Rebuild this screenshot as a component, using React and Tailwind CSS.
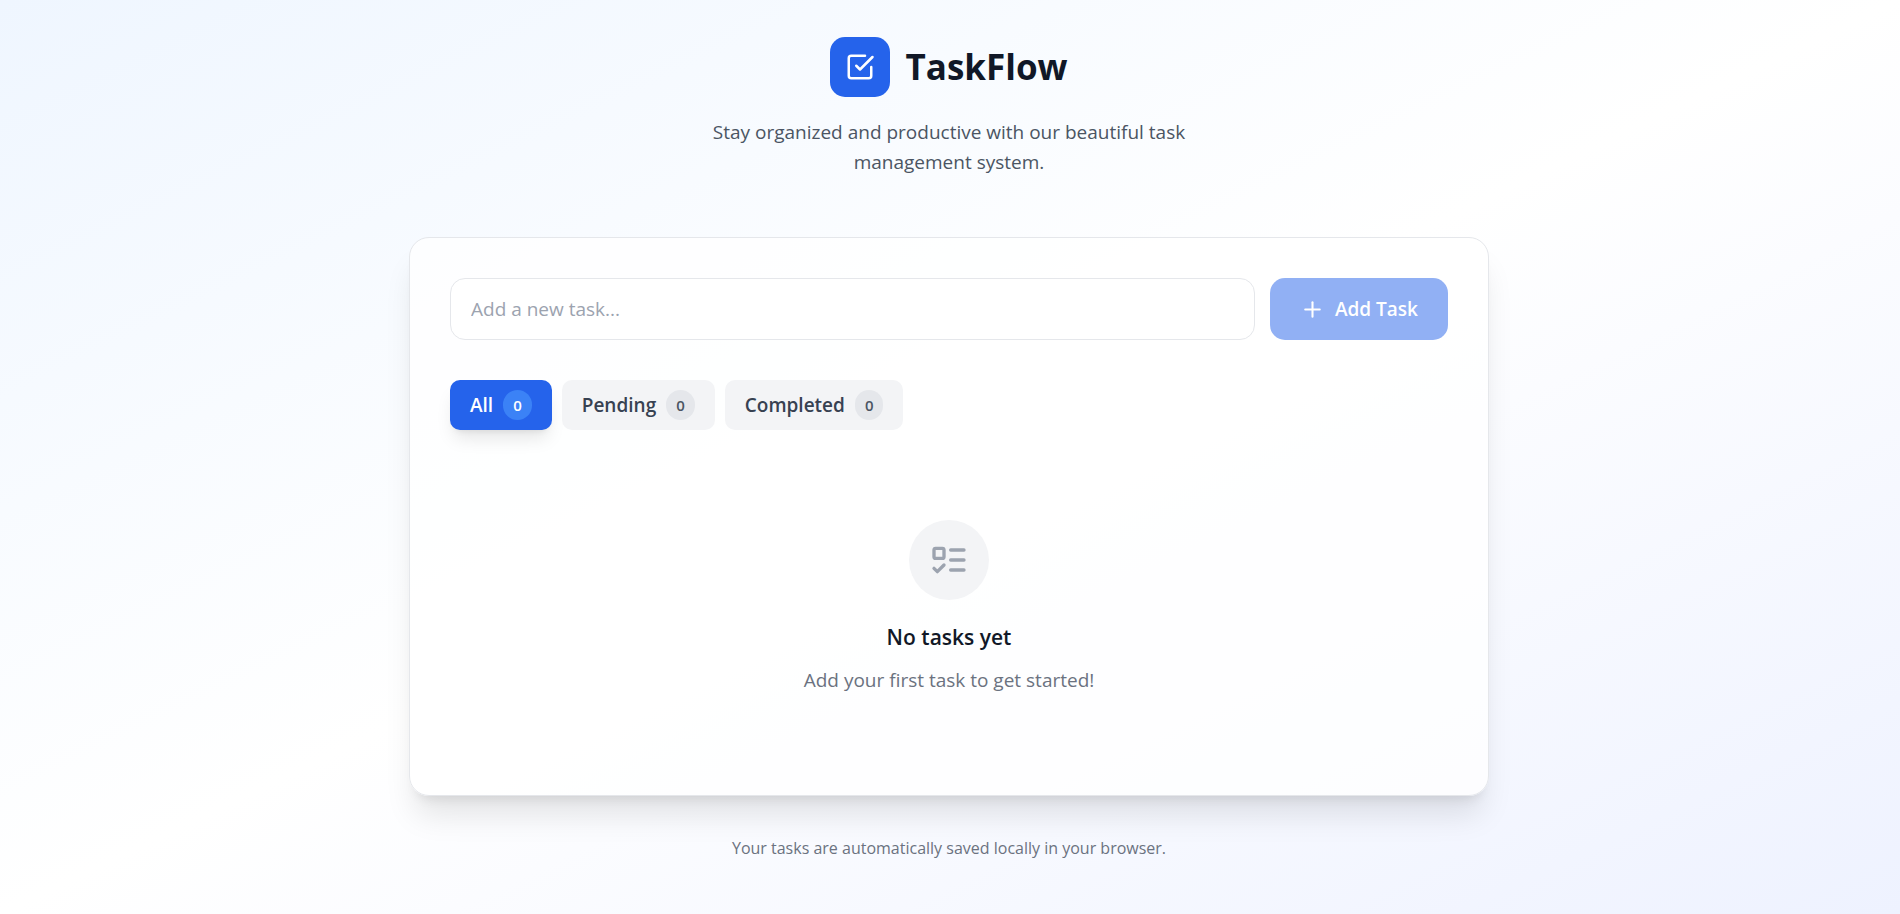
import { useState } from "react";
import { Plus } from "lucide-react";

const filters = ["All", "Pending", "Completed"];

function CheckSquareIcon({ className }) {
  return (
    <svg
      aria-hidden="true"
      viewBox="0 0 24 24"
      fill="none"
      stroke="currentColor"
      strokeWidth="2"
      strokeLinecap="round"
      strokeLinejoin="round"
      className={className}
    >
      <path d="m9 11 3 3L22 4" />
      <path d="M21 12v7a2 2 0 0 1-2 2H5a2 2 0 0 1-2-2V5a2 2 0 0 1 2-2h11" />
    </svg>
  );
}

function ListTodoIcon({ className }) {
  return (
    <svg
      aria-hidden="true"
      viewBox="0 0 24 24"
      fill="none"
      stroke="currentColor"
      strokeWidth="2"
      strokeLinecap="round"
      strokeLinejoin="round"
      className={className}
    >
      <rect x="3" y="5" width="6" height="6" rx="1" />
      <path d="m3 17 2 2 4-4" />
      <path d="M13 6h8" />
      <path d="M13 12h8" />
      <path d="M13 18h8" />
    </svg>
  );
}

export default function App() {
  const [tasks, setTasks] = useState([]);
  const [draft, setDraft] = useState("");
  const [active, setActive] = useState("All");

  const select = (name) =>
    tasks.filter((t) => name === "All" || (name === "Completed") === t.done);
  const visible = select(active);

  const addTask = (e) => {
    e.preventDefault();
    if (!draft.trim()) return;
    setTasks([...tasks, { id: Date.now(), text: draft.trim(), done: false }]);
    setDraft("");
  };

  const toggle = (id) =>
    setTasks(tasks.map((t) => (t.id === id ? { ...t, done: !t.done } : t)));

  return (
    <div className="min-h-screen bg-linear-to-br from-[#eff6ff] via-white to-[#eef2ff] pr-0.5 font-['Open_Sans','Noto_Sans',sans-serif] text-[19px] leading-[30px]">
      <main className="mx-auto max-w-[1120px] px-5 py-[37px]">
        <header className="mb-[60px] text-center">
          <div className="mb-5 flex items-center justify-center gap-[15px]">
            <div className="flex size-[60px] items-center justify-center rounded-[15px] bg-[#2563eb]">
              <CheckSquareIcon className="size-[30px] text-white" />
            </div>
            <h1 className="text-[35px] leading-[50px] font-bold text-[#111827]">TaskFlow</h1>
          </div>
          <p className="mx-auto max-w-[560px] text-[#4b5563]">
            Stay organized and productive with our beautiful task management system.
          </p>
        </header>

        <section className="rounded-[20px] border border-[#e5e7eb] bg-white/80 p-10 shadow-[0_25px_31px_-6px_rgba(0,0,0,0.1),0_10px_12px_-8px_rgba(0,0,0,0.1)]">
          <form onSubmit={addTask} className="mb-10 flex gap-[15px]">
            <input
              aria-label="New task"
              value={draft}
              onChange={(e) => setDraft(e.target.value)}
              placeholder="Add a new task..."
              className="h-[62px] min-w-0 flex-1 rounded-[15px] border border-[#e5e7eb] bg-white px-5 text-[#111827] placeholder:text-[#9ca3af]"
            />
            <button
              type="submit"
              disabled={!draft.trim()}
              className="flex items-center gap-[10px] rounded-[15px] bg-[#2563eb] px-[30px] font-semibold text-white disabled:opacity-50"
            >
              <Plus className="size-[25px]" strokeWidth={2} />
              Add Task
            </button>
          </form>

          <div className="mb-[30px] flex flex-wrap gap-[10px]">
            {filters.map((name) => (
              <button
                key={name}
                type="button"
                aria-pressed={active === name}
                onClick={() => setActive(name)}
                className={
                  active === name
                    ? "flex h-[50px] items-center gap-[10px] rounded-[10px] bg-[#2563eb] px-5 font-semibold text-white shadow-[0_12px_18px_-4px_rgba(0,0,0,0.1),0_5px_7px_-5px_rgba(0,0,0,0.1)]"
                    : "flex h-[50px] items-center gap-[10px] rounded-[10px] bg-[#f3f4f6] px-5 font-semibold text-[#374151]"
                }
              >
                {name}
                <span
                  className={
                    active === name
                      ? "rounded-full bg-[#3b82f6] px-[10px] text-[15px] text-white"
                      : "rounded-full bg-[#e5e7eb] px-[10px] text-[15px] text-[#4b5563]"
                  }
                >
                  {select(name).length}
                </span>
              </button>
            ))}
          </div>

          {visible.length === 0 ? (
            <div className="py-[60px] text-center">
              <div className="mx-auto mb-5 flex size-20 items-center justify-center rounded-full bg-[#f3f4f6]">
                <ListTodoIcon className="size-10 text-[#9ca3af]" />
              </div>
              <h2 className="mb-[10px] text-[21px] leading-[35px] font-semibold text-[#111827]">No tasks yet</h2>
              <p className="text-[#6b7280]">Add your first task to get started!</p>
            </div>
          ) : (
            <ul className="flex flex-col gap-[10px]">
              {visible.map((t) => (
                <li key={t.id}>
                  <label className="flex items-center gap-[15px] rounded-[15px] border border-[#e5e7eb] bg-white p-5">
                    <input type="checkbox" checked={t.done} onChange={() => toggle(t.id)} className="size-5" />
                    <span>{t.text}</span>
                  </label>
                </li>
              ))}
            </ul>
          )}
        </section>

        <footer className="mt-10 text-center text-[16px] leading-[25px] text-[#6b7280]">
          Your tasks are automatically saved locally in your browser.
        </footer>
      </main>
    </div>
  );
}
